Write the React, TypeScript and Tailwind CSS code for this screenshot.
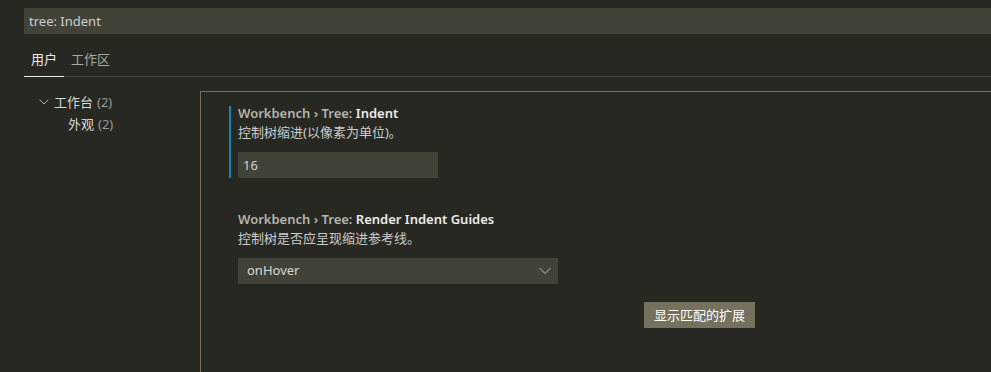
import { ChevronDown } from 'lucide-react';

const font = "font-['Noto_Sans','Noto_Sans_CJK_SC',sans-serif]";

type Setting = {
  category: string;
  label: string;
  description: string;
  focused?: boolean;
};

const settings: Setting[] = [
  {
    category: 'Workbench › Tree: ',
    label: 'Indent',
    description: '控制树缩进(以像素为单位)。',
    focused: true,
  },
  {
    category: 'Workbench › Tree: ',
    label: 'Render Indent Guides',
    description: '控制树是否应呈现缩进参考线。',
  },
];

function SettingTitle({ s }: { s: Setting }) {
  return (
    <div className="-mt-[2px] text-[13px] font-semibold leading-[18px]">
      <span className="text-[#b5b5b0]">{s.category}</span>
      <span className="text-[#ececec]">{s.label}</span>
    </div>
  );
}

export default function App() {
  return (
    <div
      className={`flex h-[372px] w-[991px] flex-col overflow-hidden bg-[#272822] ${font}`}
    >
      {/* 搜索框 */}
      <div className="pl-6 pt-2">
        <div className="h-[26px] bg-[#414339] pl-[5px] text-[13px] leading-[26px] text-[#cfcfca]">
          tree: Indent
        </div>
      </div>

      {/* 用户 / 工作区 */}
      <div className="ml-6 mt-[11px] flex border-b border-[#45453f]">
        <div className="-mb-px border-b border-[#e8e8e8] px-[7px] pb-[2px] text-[13px] leading-[29px] text-[#e8e8e8]">
          用户
        </div>
        <div className="px-[7px] pb-[2px] text-[13px] leading-[29px] text-[#a8a8a2]">
          工作区
        </div>
      </div>

      <div className="mt-[14px] flex flex-1 pl-6">
        {/* 目录 */}
        <div className="w-[176px] text-[13px] leading-[22px]">
          <div className="flex items-center pl-[12px]">
            <ChevronDown size={16} strokeWidth={1.3} className="text-[#c8c8c2]" />
            <span className="ml-[2px] text-[#d8d8d2]">工作台</span>
            <span className="ml-1 text-[#9a9a94]">(2)</span>
          </div>
          <div className="flex items-center pl-[44px]">
            <span className="text-[#d8d8d2]">外观</span>
            <span className="ml-1 text-[#9a9a94]">(2)</span>
          </div>
        </div>

        {/* 设置列表 */}
        <div className="flex-1 border-l border-t border-[#75715e] pl-[28px] pt-[14px]">
          <div className="flex flex-col gap-[34px]">
            <div
              className={`border-l-2 pl-[7px] ${settings[0].focused ? 'border-[#1a85ad]' : 'border-transparent'}`}
            >
              <SettingTitle s={settings[0]} />
              <div className="mt-[1px] text-[13px] leading-[18px] text-[#cccccc]">
                {settings[0].description}
              </div>
              <div className="mt-[11px] h-[26px] w-[200px] bg-[#414339] pl-[5px] text-[13px] leading-[26px] text-[#d0d0cc]">
                16
              </div>
            </div>

            <div className="border-l-2 border-transparent pl-[7px]">
              <SettingTitle s={settings[1]} />
              <div className="mt-[1px] text-[13px] leading-[18px] text-[#cccccc]">
                {settings[1].description}
              </div>
              <div className="mt-[11px] flex h-[26px] w-[320px] items-center justify-between bg-[#414339] pl-[9px] pr-[3px] text-[13px] text-[#d8d8d2]">
                <span>onHover</span>
                <ChevronDown size={20} strokeWidth={1.1} className="text-[#c8c8c2]" />
              </div>
            </div>
          </div>

          <div className="ml-[415px] mt-[18px] inline-block h-[26px] bg-[#75715e] px-[10px] text-[13px] leading-[26px] text-white">
            显示匹配的扩展
          </div>
        </div>
      </div>
    </div>
  );
}
